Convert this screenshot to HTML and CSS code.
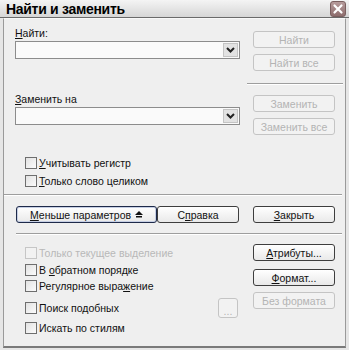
FILE: index.html
```html
<!DOCTYPE html>
<html lang="ru">
<head>
    <meta charset="UTF-8">
    <title>Найти и заменить</title>
    <link rel="stylesheet" href="styles.css">
</head>
<body>
    <div class="window">
        <div class="titlebar">
            <span class="title">Найти и заменить</span>
            <span class="close">
                <svg width="14" height="14" viewBox="0 0 14 14"><path d="M3.5 3.5 L10.5 10.5 M10.5 3.5 L3.5 10.5" stroke="#fff" stroke-width="2.2" stroke-linecap="round"/></svg>
            </span>
        </div>
        <div class="body">
            <div class="top">
                <div class="left">
                    <div class="label"><u>Н</u>айти:</div>
                    <div class="combo"><span class="drop"><svg width="9" height="6" viewBox="0 0 9 6"><path d="M1 1 L4.5 4.5 L8 1" fill="none" stroke="#222" stroke-width="2"/></svg></span></div>
                    <div class="label replace-label"><u>З</u>аменить на</div>
                    <div class="combo"><span class="drop"><svg width="9" height="6" viewBox="0 0 9 6"><path d="M1 1 L4.5 4.5 L8 1" fill="none" stroke="#222" stroke-width="2"/></svg></span></div>
                    <div class="checks top-checks">
                        <div class="check"><span class="box"></span><span><u>У</u>читывать регистр</span></div>
                        <div class="check"><span class="box"></span><span><u>Т</u>олько слово целиком</span></div>
                    </div>
                </div>
                <div class="right">
                    <button class="btn first" disabled>Найти</button>
                    <button class="btn gap" disabled>Найти все</button>
                    <div class="sep"></div>
                    <button class="btn after-sep" disabled>Заменить</button>
                    <button class="btn gap" disabled>Заменить все</button>
                </div>
            </div>
            <div class="line"></div>
            <div class="actions">
                <button class="btn more"><span><u>М</u>еньше параметров</span> <svg width="8" height="7" viewBox="0 0 8 7"><path d="M4 0 L8 4 L0 4 Z" fill="#111"/><rect x="1" y="5" width="6" height="1.5" fill="#111"/></svg></button>
                <button class="btn help"><span>С<u>п</u>равка</span></button>
                <button class="btn close-btn"><span><u>З</u>акрыть</span></button>
            </div>
            <div class="line inset"></div>
            <div class="bottom">
                <div class="left">
                    <div class="check disabled"><span class="box"></span><span>Только текущее выделение</span></div>
                    <div class="check row2"><span class="box"></span><span>В <u>о</u>братном порядке</span></div>
                    <div class="check row3"><span class="box"></span><span>Регулярное выра<u>ж</u>ение</span></div>
                    <div class="check row4"><span class="box"></span><span>Поиск подобных</span><button class="btn dots" disabled>...</button></div>
                    <div class="check row5"><span class="box"></span><span>Искать по стилям</span></div>
                </div>
                <div class="right">
                    <button class="btn attr"><span><u>А</u>трибуты...</span></button>
                    <button class="btn fmt"><span><u>Ф</u>ормат...</span></button>
                    <button class="btn nofmt" disabled>Без формата</button>
                </div>
            </div>
        </div>
    </div>
</body>
</html>
```

FILE: styles.css
```css
* {
    margin: 0;
    padding: 0;
    box-sizing: border-box;
}
body {
    width: 349px;
    height: 350px;
    background-color: #e4e4e4;
    font-family: "Liberation Sans", Arial, sans-serif;
    font-size: 10.5px;
    color: #111;
}
.window {
    width: 349px;
    height: 350px;
    display: flex;
    flex-direction: column;
    background-color: #e6e6e6;
}
.titlebar {
    height: 18px;
    display: flex;
    align-items: center;
    justify-content: space-between;
    padding: 0 3px 0 6px;
    background: linear-gradient(#f4f4f4, #d6d6d6);
    border-bottom: 1px solid #6a6a6a;
}
.title {
    font-size: 14px;
    font-weight: bold;
    color: #000;
    letter-spacing: -0.3px;
}
.close {
    width: 16px;
    height: 16px;
    display: flex;
    align-items: center;
    justify-content: center;
    border-radius: 3px;
    border: 1px solid #7a5f5f;
    background: linear-gradient(#b79c9c, #8e6d6d);
}
.body {
    flex: 1;
    margin: 0 3px 2px 3px;
    border: 1px solid #9a9a9a;
    border-top: 1px solid #f8f8f8;
    border-bottom: 2px solid #7a7a7a;
    background-color: #efefef;
    padding: 0 3px 0 11px;
}
.top {
    display: grid;
    grid-template-columns: 225px 82px;
    column-gap: 13px;
    padding-top: 8px;
}
.label {
    height: 13px;
    line-height: 13px;
}
.replace-label {
    margin-top: 34px;
}
.combo {
    height: 18px;
    margin-top: 1px;
    border: 1px solid #8c8c8c;
    background-color: #fafafa;
    display: flex;
    justify-content: flex-end;
    padding: 1px;
}
.drop {
    width: 15px;
    height: 14px;
    display: flex;
    align-items: center;
    justify-content: center;
    background-color: #e2e2e2;
    border: 1px solid #c4c4c4;
}
.checks {
    padding-left: 10px;
}
.top-checks {
    margin-top: 29px;
}
.check {
    height: 18px;
    display: flex;
    align-items: center;
    white-space: nowrap;
}
.box {
    width: 12px;
    height: 12px;
    margin-right: 2px;
    border: 1px solid #6e6e6e;
    background: linear-gradient(135deg, #e2e2e2, #fbfbfb);
    flex-shrink: 0;
}
.btn {
    height: 17px;
    width: 82px;
    border: 1px solid #3e3e3e;
    border-radius: 3px;
    background: linear-gradient(#ffffff, #e9e9e9);
    font-family: "Liberation Sans", Arial, sans-serif;
    font-size: 10.5px;
    color: #111;
    display: flex;
    align-items: center;
    justify-content: center;
    gap: 4px;
}
.btn:disabled {
    border-color: #c4c4c4;
    color: #b4b4b4;
    background: #f2f2f2;
}
.right {
    display: flex;
    flex-direction: column;
}
.first {
    margin-top: 4px;
}
.gap {
    margin-top: 6px;
}
.sep {
    height: 2px;
    margin: 12px -8px 0 -6px;
    border-top: 1px solid #9e9e9e;
    border-bottom: 1px solid #ffffff;
}
.after-sep {
    margin-top: 10px;
}
.line {
    height: 2px;
    margin-top: 4px;
    margin-left: -11px;
    border-top: 1px solid #9e9e9e;
    border-bottom: 1px solid #ffffff;
}
.actions {
    display: flex;
    margin-top: 10px;
    padding-left: 1px;
}
.more {
    width: 141px;
    border-color: #1e2a4a;
    box-shadow: inset 0 0 0 1px #c6cfe4;
}
.help {
    width: 82px;
}
.close-btn {
    margin-left: 14px;
}
.inset {
    margin-top: 10px;
    margin-left: 1px;
}
.bottom {
    display: grid;
    grid-template-columns: 225px 82px;
    column-gap: 13px;
}
.bottom .left {
    padding-left: 10px;
    padding-top: 10px;
}
.bottom .check {
    height: 16px;
}
.disabled {
    color: #b8b8b8;
}
.disabled .box {
    border-color: #c6c6c6;
    background: #f2f2f2;
}
.row2 {
    margin-top: 1px;
}
.row4 {
    margin-top: 6px;
}
.row5 {
    margin-top: 4px;
}
.dots {
    width: 20px;
    height: 20px;
    margin-left: auto;
    margin-right: 2px;
    align-items: flex-end;
}
.attr {
    margin-top: 9px;
}
.fmt {
    margin-top: 8px;
}
.nofmt {
    margin-top: 6px;
}
```
